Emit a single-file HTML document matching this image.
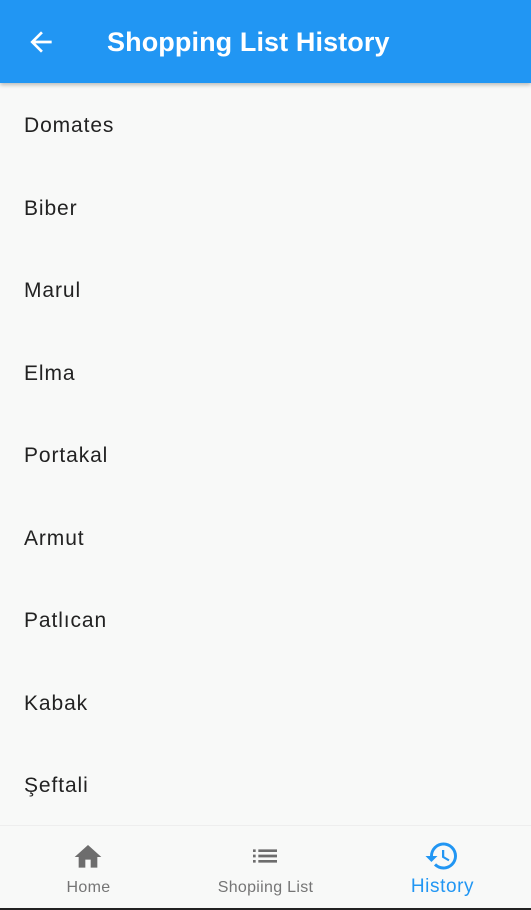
<!DOCTYPE html>
<html><head><style>
body{margin:0;width:531px;height:910px;background:#f8f9f8;font-family:"Liberation Sans",sans-serif;position:relative;overflow:hidden}
.bar{position:absolute;top:0;left:0;width:531px;height:83px;background:#2196F3;box-shadow:0 2px 4px rgba(0,0,0,.25)}
.bar .t{position:absolute;left:107px;top:27px;color:#fff;font-size:27px;font-weight:bold;letter-spacing:0.1px}
.item{position:absolute;left:24px;font-size:21px;color:#222;letter-spacing:0.9px}
.nav{position:absolute;top:825px;left:0;width:531px;height:83px;background:#f8f9f8;border-top:1px solid #eee}
.lbl{position:absolute;font-size:16px;color:#757575;text-align:center;width:177px;letter-spacing:0.3px}
.blk{position:absolute;top:908px;left:0;width:531px;height:2px;background:#222}
</style></head><body>
<div class="bar">
<svg style="position:absolute;left:25px;top:26px" width="32" height="32" viewBox="0 0 24 24"><path d="M20 11H7.83l5.59-5.59L12 4l-8 8 8 8 1.41-1.41L7.83 13H20v-2z" fill="#fff"/></svg>
<div class="t">Shopping List History</div></div>
<div class="item" style="top:114px">Domates</div>
<div class="item" style="top:197px">Biber</div>
<div class="item" style="top:279px">Marul</div>
<div class="item" style="top:362px">Elma</div>
<div class="item" style="top:444px">Portakal</div>
<div class="item" style="top:527px">Armut</div>
<div class="item" style="top:609px">Patlıcan</div>
<div class="item" style="top:692px">Kabak</div>
<div class="item" style="top:774px">Şeftali</div>
<div class="nav">
<svg style="position:absolute;left:72px;top:15px" width="32" height="32" viewBox="0 0 24 24"><path d="M10 20v-6h4v6h5v-8h3L12 3 2 12h3v8z" fill="#6d6d6d"/></svg>
<div class="lbl" style="left:0;top:53px">Home</div>
<svg style="position:absolute;left:249px;top:14px" width="32" height="32" viewBox="0 0 24 24"><path d="M3 13h2v-2H3v2zm0 4h2v-2H3v2zm0-8h2V7H3v2zm4 4h14v-2H7v2zm0 4h14v-2H7v2zM7 7v2h14V7H7z" fill="#6d6d6d"/></svg>
<div class="lbl" style="left:177px;top:53px">Shopiing List</div>
<svg style="position:absolute;left:424px;top:12px" width="36" height="36" viewBox="0 0 24 24"><path d="M13 3a9 9 0 0 0-9 9H1l3.89 3.89.07.14L9 12H6c0-3.87 3.13-7 7-7s7 3.13 7 7-3.13 7-7 7c-1.93 0-3.68-.79-4.94-2.06l-1.42 1.42A8.954 8.954 0 0 0 13 21a9 9 0 0 0 0-18zm-1 5v5l4.28 2.54.72-1.21-3.5-2.08V8H12z" fill="#2196F3"/></svg>
<div class="lbl" style="left:354px;top:50px;font-size:19px;color:#2196F3;letter-spacing:0.6px">History</div>
</div>
<div class="blk"></div>
</body></html>
